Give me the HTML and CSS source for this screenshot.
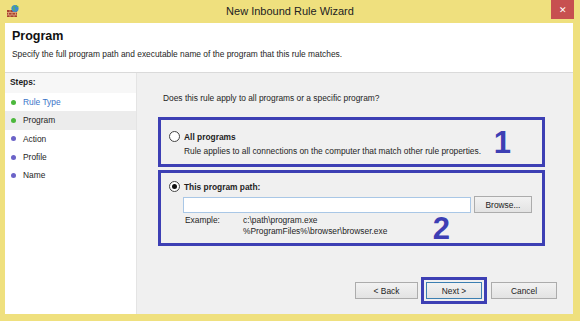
FILE: index.html
```html
<!DOCTYPE html>
<html>
<head>
  <title>New Inbound Rule Wizard</title>
  <link rel="stylesheet" href="styles.css">
</head>
<body>
  <div class="window">
    <div class="titlebar">
      <svg class="app-icon" width="14" height="14" viewBox="0 0 14 14">
        <rect x="1" y="6" width="10" height="7" fill="#a8432c"/>
        <path d="M1 8.5h10M1 11h10M4 6v2.5M8 6v2.5M2.5 8.5v2.5M6 8.5v2.5M9.5 8.5v2.5M4 11v2M8 11v2" stroke="#e8b08a" stroke-width="0.7"/>
        <circle cx="9" cy="4.5" r="3.6" fill="#3d8ad0"/>
        <path d="M7 2.5c1 .3 1.4 1.2 1 2s.2 1.6 1.2 1.8M10 1.3c.4 1 1.4 1.3 2.3 1.2" stroke="#5fb64a" stroke-width="1.2" fill="none"/>
      </svg>
      <div class="title">New Inbound Rule Wizard</div>
      <div class="close">&#x2715;</div>
    </div>

    <div class="client">
      <div class="header">
        <h1>Program</h1>
        <p>Specify the full program path and executable name of the program that this rule matches.</p>
      </div>

      <div class="main">
        <div class="steps">
          <div class="steps-title">Steps:</div>
          <div class="step done"><span class="dot"></span><span class="link">Rule Type</span></div>
          <div class="step done current"><span class="dot"></span>Program</div>
          <div class="step"><span class="dot"></span>Action</div>
          <div class="step"><span class="dot"></span>Profile</div>
          <div class="step"><span class="dot"></span>Name</div>
        </div>

        <div class="content">
          <p class="question">Does this rule apply to all programs or a specific program?</p>

          <div class="option-box box-one">
            <div class="radio-row">
              <span class="radio"></span>
              <span class="label">All programs</span>
            </div>
            <div class="hint">Rule applies to all connections on the computer that match other rule properties.</div>
            <span class="marker marker-one">1</span>
          </div>

          <div class="option-box box-two">
            <div class="radio-row">
              <span class="radio checked"></span>
              <span class="label">This program path:</span>
            </div>
            <div class="path-row">
              <input type="text" class="path-input">
              <button class="btn browse">Browse...</button>
            </div>
            <div class="example">
              <span class="example-label">Example:</span>
              <span class="example-text">c:\path\program.exe<br>%ProgramFiles%\browser\browser.exe</span>
            </div>
            <span class="marker marker-two">2</span>
          </div>

          <div class="buttons">
            <button class="btn back">&lt; Back</button>
            <div class="next-outline"><button class="btn next">Next &gt;</button></div>
            <button class="btn cancel">Cancel</button>
          </div>
        </div>
      </div>
    </div>
  </div>
</body>
</html>
```

FILE: styles.css
```css
body {
  margin: 0;
  font-family: "Liberation Sans", Arial, sans-serif;
  font-size: 8.4px;
  color: #1e1e1e;
}

.window {
  width: 580px;
  height: 321px;
  display: flex;
  flex-direction: column;
  background-color: #efe07e;
  overflow: hidden;
}

/* barra de titulo */

.titlebar {
  height: 23px;
  display: flex;
  align-items: center;
  position: relative;
  flex-shrink: 0;
}

.app-icon {
  margin-left: 6px;
  margin-top: -2px;
}

.title {
  position: absolute;
  left: 0;
  right: 0;
  text-align: center;
  font-size: 11px;
  color: #222;
  top: 5px;
}

.close {
  position: absolute;
  top: 0;
  right: 6px;
  width: 23px;
  height: 19px;
  background-color: #c75050;
  color: white;
  font-size: 9px;
  display: flex;
  align-items: center;
  justify-content: center;
}

.client {
  flex: 1;
  margin: 0 7px 7px 5px;
  display: flex;
  flex-direction: column;
  background-color: #f0f0f0;
}

/* encabezado */

.header {
  height: 50px;
  box-sizing: border-box;
  background-color: #fff;
  border-bottom: 1px solid #dadada;
  padding: 6px 0 0 7px;
}

.header h1 {
  margin: 0;
  font-size: 12.5px;
  font-weight: bold;
  color: #111;
}

.header p {
  margin: 6px 0 0 0;
  font-size: 8.4px;
}

.main {
  flex: 1;
  display: flex;
}

/* pasos */

.steps {
  width: 131px;
  background-color: #fff;
  border-right: 1px solid #e4e4e4;
}

.steps-title {
  height: 20px;
  line-height: 19px;
  padding-left: 5px;
  font-weight: bold;
  background-color: #f7f7f7;
}

.step {
  height: 18.3px;
  display: flex;
  align-items: center;
  padding-left: 5px;
}

.step .dot {
  width: 5px;
  height: 5px;
  border-radius: 50%;
  background-color: #6b63c8;
  margin: 0 7px 0 1px;
}

.step.done .dot {
  background-color: #4cb83c;
}

.step.current {
  background-color: #ececec;
}

.link {
  color: #3a74c8;
}

/* contenido */

.content {
  flex: 1;
  padding: 0 28px 0 21px;
  display: flex;
  flex-direction: column;
}

.question {
  margin: 20px 0 14px 5px;
}

.option-box {
  border: 3px solid #3d3fb4;
  position: relative;
  padding-left: 8px;
}

.box-one {
  height: 50px;
  box-sizing: border-box;
  padding-top: 11px;
}

.box-two {
  margin-top: 3px;
  height: 76px;
  box-sizing: border-box;
  padding-top: 8px;
}

.radio-row {
  display: flex;
  align-items: center;
}

.radio {
  width: 11px;
  height: 11px;
  border: 1px solid #444;
  border-radius: 50%;
  background-color: #fff;
  box-sizing: border-box;
  display: flex;
  align-items: center;
  justify-content: center;
  margin-right: 4px;
}

.radio.checked::after {
  content: "";
  width: 5px;
  height: 5px;
  border-radius: 50%;
  background-color: #111;
}

.label {
  font-weight: bold;
}

.hint {
  margin: 4px 0 0 15px;
}

.path-row {
  display: flex;
  align-items: center;
  margin: 4px 0 0 14px;
}

.path-input {
  width: 288px;
  height: 16px;
  box-sizing: border-box;
  border: 1px solid #a9c7e6;
  background-color: #fff;
  padding: 0;
}

.btn {
  font-family: "Liberation Sans", Arial, sans-serif;
  font-size: 8.4px;
  color: #222;
  border: 1px solid #acacac;
  background: linear-gradient(#f2f2f2, #e3e3e3);
  padding: 0;
  height: 17px;
}

.browse {
  width: 58px;
  margin-left: 3px;
}

.example {
  display: flex;
  margin: 2px 0 0 16px;
  line-height: 10.5px;
}

.example-label {
  width: 58px;
}

.marker {
  position: absolute;
  font-size: 31px;
  font-weight: bold;
  color: #3d3fb4;
  line-height: 1;
}

.marker-one {
  right: 31px;
  top: 7px;
}

.marker-two {
  right: 92px;
  top: 40px;
}

/* botones inferiores */

.buttons {
  margin-top: auto;
  margin-bottom: 10px;
  display: flex;
  align-items: center;
  justify-content: flex-end;
  margin-right: -12px;
}

.buttons .back {
  width: 63px;
}

.buttons .cancel {
  width: 66px;
}

.next-outline {
  border: 3px solid #3d3fb4;
  padding: 2px 2px;
  margin: 0 4px 0 3px;
}

.buttons .next {
  width: 56px;
  border-color: #3c7fb1;
}
```
